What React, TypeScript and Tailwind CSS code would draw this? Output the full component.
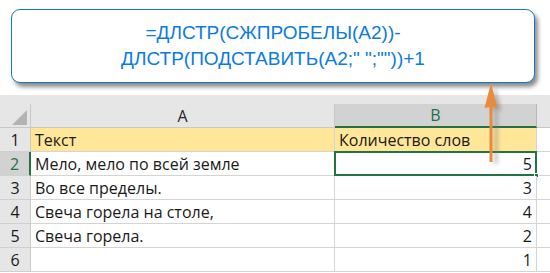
const rows = [
  { n: 1, a: "Текст", b: "Количество слов", head: true },
  { n: 2, a: "Мело, мело по всей земле", b: "5" },
  { n: 3, a: "Во все пределы.", b: "3" },
  { n: 4, a: "Свеча горела на столе,", b: "4" },
  { n: 5, a: "Свеча горела.", b: "2" },
  { n: 6, a: "", b: "1" },
];

const cell = "h-[24px] border-b border-r border-[#d4d4d4]";

function Arrow() {
  return (
    <svg className="absolute left-[480px] top-[80px]" width="28" height="90" viewBox="0 0 28 90">
      <defs>
        <filter id="soft" x="-50%" y="-20%" width="200%" height="140%">
          <feGaussianBlur stdDeviation="2" />
        </filter>
      </defs>
      {/* shadow */}
      <g filter="url(#soft)" fill="#7a7a7a" opacity="0.55">
        <path d="M13 5 L19.5 30 L15.5 29 L15.5 83 L12.5 83 L12.5 29 L8.5 30 Z" transform="translate(2 1)" />
      </g>
      <path d="M11 3 L17.5 28 L12.5 27 L12.5 82 L9.5 82 L9.5 27 L4.5 28 Z" fill="#e98a3c" />
    </svg>
  );
}

export default function App() {
  return (
    <div className="relative h-[273px] w-[550px] overflow-hidden bg-white font-['Liberation_Sans',Arial,sans-serif]">
      {/* formula callout */}
      <div className="pl-[11px] pt-[9px]">
        <div className="flex h-[74px] w-[524px] flex-col items-center justify-center rounded-[9px] border-[1.5px] border-[#1b74c5] bg-white text-[19px] leading-[26px] text-[#0a7be0] shadow-[3px_4px_4px_rgba(0,0,0,0.45)]">
          <span>=ДЛСТР(СЖПРОБЕЛЫ(A2))-</span>
          <span>ДЛСТР(ПОДСТАВИТЬ(A2;" ";""))+1</span>
        </div>
      </div>

      {/* sheet */}
      <div className="mt-[12px] bg-[#e6e6e6] pt-[9px] font-['Open_Sans','Liberation_Sans',sans-serif] text-[16px] text-[#1a1a1a]">
        <div className="grid grid-cols-[31px_304px_202px_1fr]">
          {/* column headers */}
          <div className="relative h-[24px] border-b border-r border-[#c8c8c8] bg-[#e6e6e6]">
            <svg className="absolute bottom-[2px] right-[3px]" width="15" height="15" viewBox="0 0 15 15">
              <path d="M15 0 L15 15 L0 15 Z" fill="#b3b3b3" />
            </svg>
          </div>
          <div className="flex h-[24px] items-center justify-center border-b border-r border-[#c8c8c8] bg-[#e6e6e6] text-[#262626]">A</div>
          <div className="flex h-[24px] items-center justify-center border-b-2 border-r border-b-[#217346] border-r-[#b8b8b8] bg-[#d2d2d2] text-[#217346]">B</div>
          <div className="h-[24px] border-b border-[#c8c8c8] bg-[#e6e6e6]" />

          {rows.map((r) => (
            <Row key={r.n} r={r} />
          ))}
        </div>
      </div>

      <Arrow />
    </div>
  );
}

function Row({ r }: { r: (typeof rows)[number] }) {
  const sel = r.n === 2;
  return (
    <>
      <div
        className={`flex h-[24px] items-center justify-center border-b border-[#d0d0d0] ${
          sel ? "border-r-2 border-r-[#217346] bg-[#d2d2d2] text-[#217346]" : "border-r border-r-[#c8c8c8] bg-[#e6e6e6]"
        }`}
      >
        {r.n}
      </div>
      <div className={`${cell} flex items-center pl-[4px] ${r.head ? "bg-[#ffe699]" : "bg-white"}`}>{r.a}</div>
      <div className={`${cell} relative flex items-center ${r.head ? "bg-[#ffe699] pl-[4px]" : "justify-end bg-white pr-[4px]"}`}>
        {r.b}
        {sel && (
          <>
            <div className="pointer-events-none absolute -left-[1px] -top-[1px] bottom-[-1px] right-[-1px] border-2 border-[#217346]" />
            <div className="absolute -bottom-[3px] -right-[3px] h-[5px] w-[5px] border border-white bg-[#217346]" />
          </>
        )}
      </div>
      <div className="h-[24px] border-b border-[#d4d4d4] bg-white" />
    </>
  );
}
